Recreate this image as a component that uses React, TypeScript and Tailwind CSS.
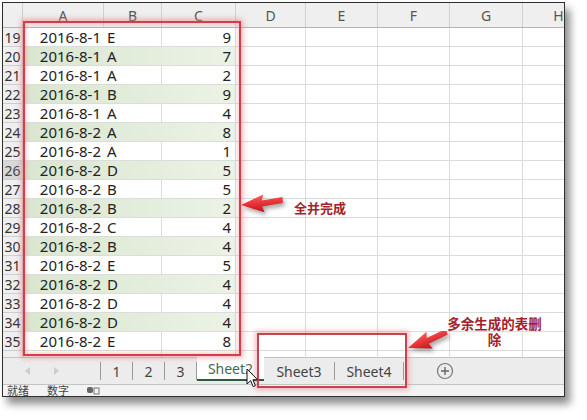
import React from 'react';

const rows: [number, string, string, number][] = [
  [19, '2016-8-1', 'E', 9],
  [20, '2016-8-1', 'A', 7],
  [21, '2016-8-1', 'A', 2],
  [22, '2016-8-1', 'B', 9],
  [23, '2016-8-1', 'A', 4],
  [24, '2016-8-2', 'A', 8],
  [25, '2016-8-2', 'A', 1],
  [26, '2016-8-2', 'D', 5],
  [27, '2016-8-2', 'B', 5],
  [28, '2016-8-2', 'B', 2],
  [29, '2016-8-2', 'C', 4],
  [30, '2016-8-2', 'B', 4],
  [31, '2016-8-2', 'E', 5],
  [32, '2016-8-2', 'D', 4],
  [33, '2016-8-2', 'D', 4],
  [34, '2016-8-2', 'D', 4],
  [35, '2016-8-2', 'E', 8],
];

const cols = [
  { name: 'A', w: 'w-[81px]' },
  { name: 'B', w: 'w-[58px]' },
  { name: 'C', w: 'w-[74px]' },
  { name: 'D', w: 'w-[70px]' },
  { name: 'E', w: 'w-[72px]' },
  { name: 'F', w: 'w-[72px]' },
  { name: 'G', w: 'w-[73px]' },
  { name: 'H', w: 'w-[72px]' },
];

const emptyCols = ['w-[70px]', 'w-[72px]', 'w-[72px]', 'w-[73px]', 'w-[72px]'];

const Arrow = ({ className, rotate }: { className: string; rotate: number }) => (
  <svg className={className} width="52" height="34" viewBox="0 0 52 34">
    <defs>
      <linearGradient id={`ag${rotate}`} x1="0" y1="0" x2="0" y2="1">
        <stop offset="0" stopColor="#ff5a5a" />
        <stop offset="1" stopColor="#c80c12" />
      </linearGradient>
    </defs>
    <g transform={`rotate(${rotate} 4 17)`}>
      <polygon
        points="4,17 27,8 25,14 46,12 46,18 25,20 27,26"
        fill={`url(#ag${rotate})`}
      />
    </g>
  </svg>
);

export default function App() {
  return (
    <div
      className="relative w-[587px] h-[420px] bg-white overflow-hidden text-[#222]"
      style={{ fontFamily: '"Noto Sans", "Noto Sans CJK SC", sans-serif' }}
    >
      <div className="ml-[2px] mt-[2px] w-[563px] h-[395px] border border-[#2f2f2f] bg-white overflow-hidden flex flex-col shadow-[5px_7px_8px_rgba(0,0,0,0.45)]">
        {/* column headers */}
        <div className="flex h-[25px] shrink-0 bg-[#efefef] border-b border-[#b4b4b4]">
          <div className="w-[20px] shrink-0 border-r border-[#cfcfcf]" />
          {cols.map((c) => (
            <div
              key={c.name}
              className={`${c.w} shrink-0 border-r border-[#d0d0d0] flex items-center justify-center text-[14px] text-[#555]`}
            >
              {c.name}
            </div>
          ))}
        </div>

        {/* data rows */}
        {rows.map(([n, date, key, val]) => {
          const green = n % 2 === 0;
          return (
            <div key={n} className="flex h-[19px] shrink-0">
              <div
                className={`w-[20px] shrink-0 flex items-center justify-center text-[14px] border-r border-b border-[#cfcfcf] ${
                  n === 26 ? 'bg-[#d8d8d8] text-[#444]' : 'bg-[#efefef] text-[#333]'
                }`}
              >
                {n}
              </div>
              <div
                className={`flex shrink-0 border-b border-[#dcdcdc] text-[15px] leading-none ${
                  green ? 'bg-linear-to-r from-[#d9e6cf] to-[#ecf3e6]' : 'bg-white'
                }`}
              >
                <div
                  className={`w-[81px] flex items-center justify-end pr-[3px] ${
                    n === 26 ? 'border-l-2 border-[#52704f]' : ''
                  }`}
                >
                  {date}
                </div>
                <div
                  className={`w-[58px] flex items-center pl-[3px] ${
                    green ? '' : 'border-r border-[#dcdcdc]'
                  }`}
                >
                  {key}
                </div>
                <div className="w-[74px] flex items-center justify-end pr-[4px] border-r border-[#dcdcdc]">
                  {val}
                </div>
              </div>
              {emptyCols.map((w, i) => (
                <div key={i} className={`${w} shrink-0 border-r border-b border-[#dcdcdc]`} />
              ))}
            </div>
          );
        })}

        {/* partial row */}
        <div className="flex h-[6px] shrink-0">
          <div className="w-[20px] shrink-0 bg-[#efefef] border-r border-[#cfcfcf]" />
          <div className="w-[81px] shrink-0" />
          <div className="w-[58px] shrink-0 border-r border-[#dcdcdc]" />
          <div className="w-[74px] shrink-0 border-r border-[#dcdcdc]" />
          {emptyCols.map((w, i) => (
            <div key={i} className={`${w} shrink-0 border-r border-[#dcdcdc]`} />
          ))}
        </div>

        {/* sheet tabs */}
        <div className="flex h-[28px] shrink-0 bg-[#ececec] border-t border-[#c4c4c4] border-b border-[#b8b8b8] text-[14px] text-[#444]">
          <div className="w-[97px] shrink-0 flex items-center">
            <span className="ml-[22px] w-0 h-0 border-y-[4px] border-y-transparent border-r-[5px] border-r-[#cdcdcd]" />
            <span className="ml-[24px] w-0 h-0 border-y-[4px] border-y-transparent border-l-[5px] border-l-[#cdcdcd]" />
          </div>
          <div className="my-[4px] w-px bg-[#9a9a9a]" />
          {['1', '2', '3'].map((t) => (
            <React.Fragment key={t}>
              <div className="w-[31px] flex items-center justify-center">{t}</div>
              <div className="my-[4px] w-px bg-[#9a9a9a]" />
            </React.Fragment>
          ))}
          <div className="w-[67px] -mt-px mb-[3px] bg-white border-b-2 border-[#2d5b3d] flex items-center justify-center text-[#3f6b52]">
            Sheet2
          </div>
          <div className="w-[70px] flex items-center justify-center">Sheet3</div>
          <div className="my-[4px] w-px bg-[#9a9a9a]" />
          <div className="w-[68px] flex items-center justify-center">Sheet4</div>
          <div className="my-[4px] w-px bg-[#9a9a9a]" />
          <div className="ml-[32px] flex items-center">
            <svg width="18" height="18" viewBox="0 0 18 18">
              <circle cx="9" cy="9" r="7.5" fill="none" stroke="#777" strokeWidth="1.2" />
              <path d="M9 5v8M5 9h8" stroke="#666" strokeWidth="1.4" />
            </svg>
          </div>
        </div>

        {/* status bar */}
        <div className="flex-1 bg-[#f3f3f3] flex items-center gap-[18px] pl-[4px] text-[11px] leading-[11px] text-[#444]">
          <span>就绪</span>
          <span>数字</span>
          <svg width="13" height="9" viewBox="0 0 13 9">
            <rect x="0" y="1" width="6" height="6" rx="2" fill="#666" />
            <rect x="7" y="2" width="5" height="6" fill="none" stroke="#777" />
          </svg>
        </div>
      </div>

      {/* annotation: merged range */}
      <div className="absolute left-[23px] top-[21px] w-[218px] h-[335px] border-2 border-[#d33f49] shadow-[0_0_5px_2px_rgba(235,120,130,0.55),inset_0_0_4px_1px_rgba(235,120,130,0.45)]" />
      <Arrow className="absolute left-[237px] top-[188px] drop-shadow-[2px_3px_2px_rgba(0,0,0,0.35)]" rotate={-4} />
      <div className="absolute left-[294px] top-[199px] text-[13px] font-bold leading-[18px] text-[#a3222a]">
        全并完成
      </div>

      {/* annotation: extra sheets */}
      <div className="absolute left-[257px] top-[333px] w-[150px] h-[55px] border-2 border-[#c8444c] shadow-[0_0_5px_2px_rgba(235,120,130,0.5)]" />
      <Arrow className="absolute left-[404px] top-[331px] drop-shadow-[2px_3px_2px_rgba(0,0,0,0.35)]" rotate={-20} />
      <div className="absolute left-[445px] top-[316px] w-[99px] text-center text-[13.5px] font-bold leading-[16px] text-[#a3222a]">
        多余生成的表删除
      </div>

      {/* mouse cursor */}
      <svg className="absolute left-[246px] top-[368px]" width="13" height="21" viewBox="0 0 13 21">
        <path
          d="M1 1 L1 16 L4.6 12.6 L7.2 18.6 L9.4 17.6 L6.9 11.8 L11.6 11.8 Z"
          fill="#fff"
          stroke="#111"
          strokeWidth="1"
          strokeLinejoin="round"
        />
      </svg>
    </div>
  );
}
